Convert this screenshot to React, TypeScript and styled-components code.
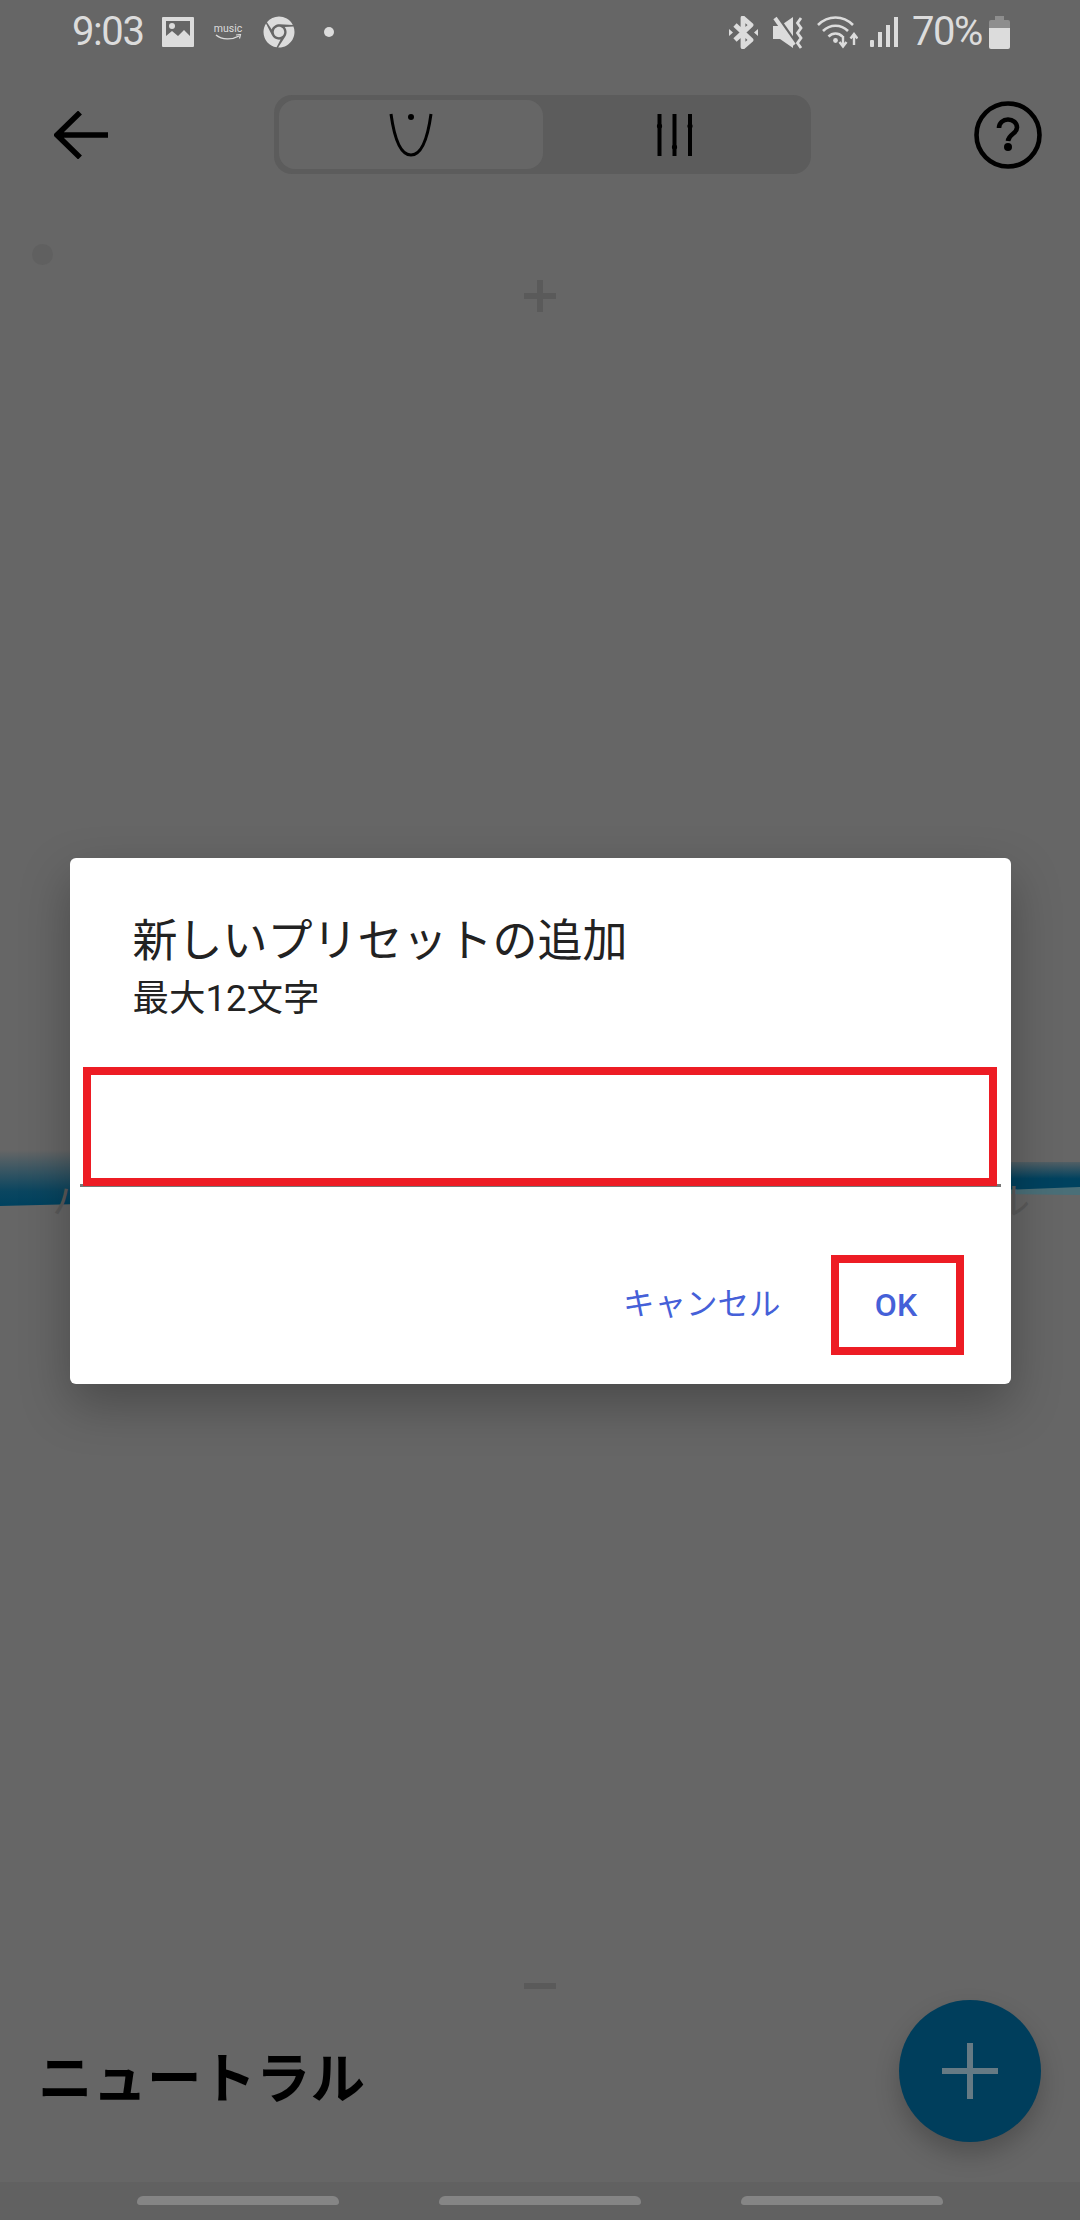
import React from "react";
import styled, { createGlobalStyle } from "styled-components";
import { FaChrome } from "react-icons/fa";

const GlobalStyle = createGlobalStyle`
  html, body {
    margin: 0;
    padding: 0;
    background: #666666;
  }
  * {
    box-sizing: border-box;
  }
`;

const FONT = `Roboto, "Noto Sans CJK JP", sans-serif`;
const RED = "#ed1c24";
const BAR_ICON = "#dcdcdc";

const Page = styled.div`
  position: relative;
  display: flex;
  flex-direction: column;
  width: 1080px;
  height: 2220px;
  overflow: hidden;
  background: #666666;
  font-family: ${FONT};
`;

const StatusBar = styled.div`
  display: flex;
  align-items: center;
  flex: none;
  height: 64px;
  padding: 0 70px 0 72px;
  color: ${BAR_ICON};
`;

const StatusText = styled.span<{ $ml?: number }>`
  margin-left: ${(p) => p.$ml ?? 0}px;
  font-size: 40px;
  line-height: 64px;
  letter-spacing: -1.4px;
  white-space: nowrap;
`;

const StatusIcon = styled.svg<{ $ml?: number }>`
  display: block;
  flex: none;
  margin-left: ${(p) => p.$ml ?? 0}px;
`;

const ChromeIcon = styled(FaChrome)`
  flex: none;
  width: 32px;
  height: 32px;
  margin-left: 21px;
`;

const StatusSpacer = styled.div`
  flex: 1;
`;

const MusicBadge = styled.div`
  display: flex;
  flex-direction: column;
  align-items: center;
  flex: none;
  width: 27px;
  margin-left: 21px;
`;

const MusicLabel = styled.span`
  font-size: 10.5px;
  line-height: 11px;
  color: ${BAR_ICON};
`;

const Toolbar = styled.div`
  display: grid;
  grid-template-columns: 274px 537px 1fr;
  align-items: center;
  flex: none;
  height: 79px;
  margin-top: 31px;
`;

const BackButton = styled.div`
  display: flex;
  padding-left: 54px;
`;

const HelpButton = styled.div`
  display: flex;
  justify-content: flex-end;
  padding-right: 38px;
`;

const Segment = styled.div`
  display: flex;
  height: 79px;
  padding: 5px;
  background: #5c5c5c;
  border-radius: 18px;
`;

const SegmentItem = styled.div<{ $active?: boolean }>`
  display: flex;
  align-items: center;
  justify-content: center;
  flex: 1;
  background: ${(p) => (p.$active ? "#666666" : "transparent")};
  border-radius: 16px;
`;

const Canvas = styled.div`
  position: relative;
  display: flex;
  flex-direction: column;
  align-items: center;
  justify-content: space-between;
  flex: 1;
  padding: 106px 0 11px;
`;

const AxisPlus = styled.div`
  position: relative;
  width: 32px;
  height: 32px;
  &::before,
  &::after {
    content: "";
    position: absolute;
    background: #5a5a5a;
  }
  &::before {
    left: 0;
    right: 0;
    top: 13px;
    height: 6px;
  }
  &::after {
    top: 0;
    bottom: 0;
    left: 13px;
    width: 6px;
  }
`;

const AxisMinus = styled.div`
  width: 32px;
  height: 6px;
  background: #5a5a5a;
`;

const GraphDot = styled.div`
  position: absolute;
  left: 32px;
  top: 70px;
  width: 21px;
  height: 21px;
  border-radius: 50%;
  background: #606060;
`;

const GraphCurve = styled.svg`
  position: absolute;
  left: 0;
  top: 950px;
`;

const BandLabels = styled.div`
  position: absolute;
  left: 52px;
  right: 50px;
  top: 1007px;
  display: flex;
  justify-content: space-between;
  font-size: 38px;
  line-height: 40px;
  color: #5a5a5a;
`;

const Footer = styled.div`
  display: flex;
  align-items: center;
  justify-content: space-between;
  flex: none;
  height: 182px;
  padding: 0 39px 40px 38px;
`;

const PresetName = styled.div`
  margin-top: 15px;
  font-size: 54.5px;
  font-weight: 700;
  line-height: 60px;
  color: #000000;
`;

const Fab = styled.div`
  position: relative;
  width: 142px;
  height: 142px;
  border-radius: 50%;
  background: #003e5c;
  box-shadow: 0 12px 24px rgba(0, 0, 0, 0.22);
  &::before,
  &::after {
    content: "";
    position: absolute;
    background: #667a84;
  }
  &::before {
    left: 43px;
    top: 68px;
    width: 56px;
    height: 6px;
  }
  &::after {
    left: 68px;
    top: 43px;
    width: 6px;
    height: 56px;
  }
`;

const NavBar = styled.div`
  display: grid;
  grid-template-columns: repeat(3, 202px);
  justify-content: center;
  column-gap: 100px;
  flex: none;
  height: 38px;
  padding-top: 14px;
  background: #616161;
`;

const NavPill = styled.div`
  height: 9px;
  border-radius: 6px 6px 3px 3px;
  background: #858585;
`;

const Overlay = styled.div`
  position: absolute;
  inset: 0;
  display: flex;
  justify-content: center;
  padding-top: 858px;
`;

const Dialog = styled.div`
  display: flex;
  flex-direction: column;
  width: 941px;
  height: 526px;
  padding-top: 56px;
  background: #ffffff;
  border-radius: 6px;
  box-shadow: 0 20px 50px rgba(0, 0, 0, 0.28);
`;

const DialogTitle = styled.div`
  padding-left: 63px;
  font-size: 45px;
  line-height: 56px;
  color: #222222;
`;

const DialogHint = styled.div`
  margin-top: 7px;
  padding-left: 63px;
  font-size: 36.5px;
  line-height: 44px;
  color: #222222;
`;

const InputRow = styled.div`
  position: relative;
  height: 120px;
  margin: 46px 10px 0;
  border-bottom: 3px solid #777777;
`;

const InputHighlight = styled.div`
  position: absolute;
  left: 3px;
  right: 4px;
  top: 0;
  bottom: -2px;
  border: 8px solid ${RED};
`;

const Actions = styled.div`
  display: flex;
  align-items: center;
  justify-content: flex-end;
  gap: 50px;
  margin-top: 68px;
  padding-right: 47px;
`;

const CancelButton = styled.div`
  font-size: 31.500px;
  line-height: 40px;
  color: #4560d8;
`;

const OkButton = styled.div`
  display: flex;
  align-items: center;
  justify-content: center;
  width: 133px;
  height: 100px;
  padding-right: 2px;
  border: 8px solid ${RED};
  font-size: 32px;
  font-weight: 500;
  color: #4560d8;
`;

const ImageIcon = () => (
  <StatusIcon $ml={18} width="32" height="30" viewBox="0 0 32 30">
    <path
      fillRule="evenodd"
      fill={BAR_ICON}
      d="M1 0h30a1 1 0 0 1 1 1v28a1 1 0 0 1-1 1H1a1 1 0 0 1-1-1V1a1 1 0 0 1 1-1zM4 4v15l6-5 6 5 6-6 6 6V4z"
    />
    <circle cx="10" cy="9" r="3" fill={BAR_ICON} />
  </StatusIcon>
);

const MusicIcon = () => (
  <MusicBadge>
    <MusicLabel>music</MusicLabel>
    <svg width="27" height="8" viewBox="0 0 27 8">
      <path d="M1 1c6 5 16 5 23 1" fill="none" stroke={BAR_ICON} strokeWidth="1.4" />
      <path d="M21 1l4.500-.5-1 4" fill="none" stroke={BAR_ICON} strokeWidth="1.2" />
    </svg>
  </MusicBadge>
);

const BluetoothIcon = () => (
  <StatusIcon width="29" height="33" viewBox="0 0 29 33">
    <path
      d="M6 9l16 15-8 7V2l8 7L6 24"
      fill="none"
      stroke={BAR_ICON}
      strokeWidth="4.800"
      strokeLinejoin="round"
    />
    <path d="M0 13l4 3.500L0 20zM29 13l-4 3.500 4 3.500z" fill={BAR_ICON} />
  </StatusIcon>
);

const MuteIcon = () => (
  <StatusIcon $ml={15} width="31" height="33" viewBox="0 0 31 33">
    <path d="M0 10h7L20 1v31L7 23H0z" fill={BAR_ICON} />
    <path d="M4 0l19 27" stroke="#666666" strokeWidth="3" />
    <path d="M2 2l19 27" stroke={BAR_ICON} strokeWidth="4" />
    <path
      d="M28 2l-3.500 5 3.500 5-3.500 5 3.500 5-3.500 5 3.500 5"
      fill="none"
      stroke={BAR_ICON}
      strokeWidth="2.800"
    />
  </StatusIcon>
);

const WifiIcon = () => (
  <StatusIcon $ml={13} width="41" height="33" viewBox="0 0 41 33">
    <g fill="none" stroke={BAR_ICON} strokeWidth="2.600">
      <path d="M1 9c10-10 25-10 35 0" />
      <path d="M6 15c7-7 18-7 25 0" />
      <path d="M11.500 20.500c4-4 10-4 14 0" />
    </g>
    <circle cx="18.500" cy="24.500" r="2.400" fill={BAR_ICON} />
    <path d="M26 20v9M22.500 26l3.500 4.500 3.500-4.500" fill="none" stroke={BAR_ICON} strokeWidth="2.400" />
    <path d="M37 29v-10M33.500 22.500l3.500-4.500 3.500 4.500" fill="none" stroke={BAR_ICON} strokeWidth="2.400" />
  </StatusIcon>
);

const SignalIcon = () => (
  <StatusIcon $ml={12} width="28" height="30" viewBox="0 0 28 30">
    <rect x="0" y="23" width="4" height="7" rx="1" fill={BAR_ICON} />
    <rect x="8" y="15" width="4" height="15" fill={BAR_ICON} />
    <rect x="16" y="8" width="4" height="22" fill={BAR_ICON} />
    <rect x="24" y="0" width="4" height="30" fill={BAR_ICON} />
  </StatusIcon>
);

const BatteryIcon = () => (
  <StatusIcon $ml={7} width="21" height="33" viewBox="0 0 21 33">
    <path d="M6 0h9v4h4a2 2 0 0 1 2 2v6H0V6a2 2 0 0 1 2-2h4z" fill="#8e8e8e" />
    <path d="M0 12h21v19a2 2 0 0 1-2 2H2a2 2 0 0 1-2-2z" fill={BAR_ICON} />
  </StatusIcon>
);

const BackIcon = () => (
  <svg width="54" height="48" viewBox="0 0 54 48">
    <path d="M54 24H3M26 1.500L3 24l23 22.500" fill="none" stroke="#000" strokeWidth="5.500" />
  </svg>
);

const HelpIcon = () => (
  <svg width="68" height="68" viewBox="0 0 68 68">
    <circle cx="34" cy="34" r="31.500" fill="none" stroke="#000" strokeWidth="4.600" />
    <path
      d="M25 27c0-5 4-8.500 9-8.500s9 3.500 9 8c0 6.500-8.500 6.500-9 13.500"
      fill="none"
      stroke="#000"
      strokeWidth="4.600"
    />
    <circle cx="34" cy="46" r="4" fill="#000" />
  </svg>
);

const CurveIcon = () => (
  <svg width="44" height="44" viewBox="0 0 44 44">
    <path d="M2 1c3 22 9 41 20 41S39 23 42 1" fill="none" stroke="#000" strokeWidth="3" />
    <circle cx="22" cy="4" r="3" fill="#000" />
  </svg>
);

const SlidersIcon = () => (
  <svg width="40" height="44" viewBox="0 0 40 44">
    <g fill="#000">
      <rect x="3.500" y="1" width="4" height="42" />
      <rect x="18.500" y="1" width="4" height="42" />
      <rect x="34" y="1" width="4" height="42" />
      <circle cx="5.500" cy="13" r="2.600" />
      <circle cx="20.500" cy="34" r="2.600" />
      <circle cx="36" cy="13" r="2.600" />
    </g>
  </svg>
);

const App = () => {
  return (
    <Page>
      <GlobalStyle />
      <StatusBar>
        <StatusText>9:03</StatusText>
        <ImageIcon />
        <MusicIcon />
        <ChromeIcon />
        <StatusIcon $ml={29} width="10" height="10" viewBox="0 0 10 10">
          <circle cx="5" cy="5" r="5" fill={BAR_ICON} />
        </StatusIcon>
        <StatusSpacer />
        <BluetoothIcon />
        <MuteIcon />
        <WifiIcon />
        <SignalIcon />
        <StatusText $ml={14}>70%</StatusText>
        <BatteryIcon />
      </StatusBar>

      <Toolbar>
        <BackButton>
          <BackIcon />
        </BackButton>
        <Segment>
          <SegmentItem $active>
            <CurveIcon />
          </SegmentItem>
          <SegmentItem>
            <SlidersIcon />
          </SegmentItem>
        </Segment>
        <HelpButton>
          <HelpIcon />
        </HelpButton>
      </Toolbar>

      <Canvas>
        <GraphDot />
        <GraphCurve width="1080" height="90" viewBox="0 0 1080 90">
          <defs>
            <linearGradient id="bandLeft" x1="0" y1="26" x2="0" y2="81" gradientUnits="userSpaceOnUse">
              <stop offset="0" stopColor="#00425f" stopOpacity="0" />
              <stop offset="0.75" stopColor="#00425f" stopOpacity="0.9" />
              <stop offset="1" stopColor="#00425f" />
            </linearGradient>
            <linearGradient id="bandRight" x1="0" y1="38" x2="0" y2="66" gradientUnits="userSpaceOnUse">
              <stop offset="0" stopColor="#00425f" stopOpacity="0.2" />
              <stop offset="0.6" stopColor="#00425f" />
              <stop offset="1" stopColor="#00425f" />
            </linearGradient>
          </defs>
          <path d="M0 26H80V80L0 82z" fill="url(#bandLeft)" />
          <path d="M1000 66L1080 62V71L1000 70z" fill="#4a6f78" />
          <path d="M1000 38H1080V63L1000 66z" fill="url(#bandRight)" />
        </GraphCurve>
        <BandLabels>
          <span>ハ</span>
          <span>ル</span>
        </BandLabels>
        <AxisPlus />
        <AxisMinus />
      </Canvas>

      <Footer>
        <PresetName>ニュートラル</PresetName>
        <Fab />
      </Footer>

      <NavBar>
        <NavPill />
        <NavPill />
        <NavPill />
      </NavBar>

      <Overlay>
        <Dialog>
          <DialogTitle>新しいプリセットの追加</DialogTitle>
          <DialogHint>最大12文字</DialogHint>
          <InputRow>
            <InputHighlight />
          </InputRow>
          <Actions>
            <CancelButton>キャンセル</CancelButton>
            <OkButton>OK</OkButton>
          </Actions>
        </Dialog>
      </Overlay>
    </Page>
  );
};

export default App;
